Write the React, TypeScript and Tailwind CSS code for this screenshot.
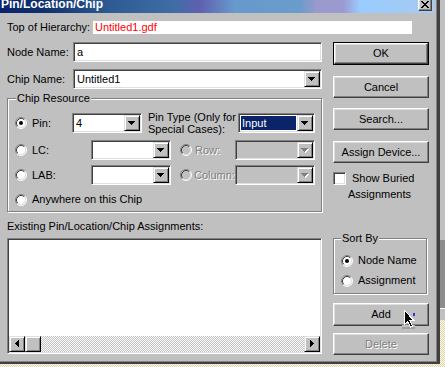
import React from 'react';

const sunken =
  'border border-t-[#808080] border-l-[#808080] border-b-white border-r-white shadow-[inset_1px_1px_0_#404040,inset_-1px_-1px_0_#dfdfdf]';
const raised =
  'border border-t-white border-l-white border-b-[#404040] border-r-[#404040] shadow-[inset_-1px_-1px_0_#808080,inset_1px_1px_0_#dfdfdf] bg-[#c0c0c0]';
const etched = 'border border-[#808080] shadow-[inset_1px_1px_0_#fff,1px_1px_0_#fff]';
const disabledText = 'text-[#808080] [text-shadow:1px_1px_0_#fff]';
const dither = 'bg-[repeating-conic-gradient(#ffffff_0%_25%,#c0c0c0_0%_50%)] bg-[length:2px_2px]';

function Arrow({ dir, disabled }: { dir: 'down' | 'left' | 'right'; disabled?: boolean }) {
  const fill = disabled ? '#808080' : '#000';
  const rows =
    dir === 'down'
      ? [
          [0, 0, 7, 1],
          [1, 1, 5, 1],
          [2, 2, 3, 1],
          [3, 3, 1, 1],
        ]
      : dir === 'left'
        ? [
            [3, 0, 1, 7],
            [2, 1, 1, 5],
            [1, 2, 1, 3],
            [0, 3, 1, 1],
          ]
        : [
            [0, 0, 1, 7],
            [1, 1, 1, 5],
            [2, 2, 1, 3],
            [3, 3, 1, 1],
          ];
  const w = dir === 'down' ? 8 : 5;
  const h = dir === 'down' ? 5 : 8;
  return (
    <svg width={w} height={h} viewBox={`0 0 ${w} ${h}`} shapeRendering="crispEdges">
      {disabled &&
        rows.map((r, i) => <rect key={'s' + i} x={r[0] + 1} y={r[1] + 1} width={r[2]} height={r[3]} fill="#fff" />)}
      {rows.map((r, i) => (
        <rect key={i} x={r[0]} y={r[1]} width={r[2]} height={r[3]} fill={fill} />
      ))}
    </svg>
  );
}

function ArrowButton({ dir, disabled }: { dir: 'down' | 'left' | 'right'; disabled?: boolean }) {
  return (
    <div className="flex h-[16px] w-[16px] shrink-0 items-center justify-center border border-t-[#dfdfdf] border-l-[#dfdfdf] border-b-black border-r-black bg-[#c0c0c0] shadow-[inset_1px_1px_0_#fff,inset_-1px_-1px_0_#808080]">
      <Arrow dir={dir} disabled={disabled} />
    </div>
  );
}

function Combo({ w, text, disabled, selected }: { w: string; text?: string; disabled?: boolean; selected?: boolean }) {
  return (
    <div className={`${sunken} ${w} flex h-[20px] shrink-0 p-[1px] ${disabled ? 'bg-[#c0c0c0]' : 'bg-white'}`}>
      <div className="flex flex-1 p-[1px]">
        <span className={`flex h-full w-full items-center pl-[1px] ${selected ? 'bg-[#0a246a] text-white' : ''}`}>
          {text}
        </span>
      </div>
      <ArrowButton dir="down" disabled={disabled} />
    </div>
  );
}

function Radio({ checked, disabled }: { checked?: boolean; disabled?: boolean }) {
  return (
    <svg width="12" height="12" viewBox="0 0 12 12" className="shrink-0">
      <circle cx="6" cy="6" r="5" fill={disabled ? '#c0c0c0' : '#fff'} />
      <path d="M2.11 9.89 A5.5 5.5 0 0 1 9.89 2.11" fill="none" stroke="#808080" />
      <path d="M9.89 2.11 A5.5 5.5 0 0 1 2.11 9.89" fill="none" stroke="#fff" />
      <path d="M2.82 9.18 A4.5 4.5 0 0 1 9.18 2.82" fill="none" stroke="#404040" />
      <path d="M9.18 2.82 A4.5 4.5 0 0 1 2.82 9.18" fill="none" stroke="#dfdfdf" />
      {checked && <circle cx="6" cy="6" r="2" fill="#000" />}
    </svg>
  );
}

function Button({ label, h = 'h-[22px]', mt, def, disabled }: { label: string; h?: string; mt: string; def?: boolean; disabled?: boolean }) {
  const inner = (
    <div className={`${raised} flex h-full w-full items-center justify-center ${disabled ? disabledText : ''}`}>
      {label}
    </div>
  );
  return (
    <div className={`${mt} ${h} w-[96px] ${def ? 'border border-black' : ''}`}>
      {inner}
    </div>
  );
}

export default function App() {
  return (
    <div className="relative h-[367px] w-[445px] overflow-hidden bg-[repeating-conic-gradient(#fffbe4_0%_25%,#d9d2b6_0%_50%)] bg-[length:2px_2px] font-['Liberation_Sans',Arial,sans-serif] text-[11px] leading-[13px] text-black">
      {/* window behind, on the right */}
      <div className="absolute left-[440px] top-0 h-[240px] w-[5px] bg-[#c0c0c0]" />
      <div className="absolute left-[440px] top-[240px] h-[68px] w-[5px] bg-[#8c8c8c]" />
      <div className="absolute left-[440px] top-[308px] h-[12px] w-[5px] border-t border-white bg-[#c0c0c0]" />

      <div className="flex h-[364px] w-[440px] flex-col border-r-[3px] border-b-2 border-[#404040] bg-[#c0c0c0] shadow-[inset_-1px_-1px_0_#808080]">
        {/* title bar */}
        <div className="mr-[3px] flex h-[13px] items-start bg-[linear-gradient(90deg,#0a246a_0%,#10306e_10%,#2d5a91_25%,#3f6da6_40%,#6060b0_46%,#6699cc_54%,#6a9ccc_69%,#9999cc_73%,#9a9ad0_79%,#99ccff_83%,#a6caf0_100%)]">
          <span className="-mt-[2px] pl-[1px] text-[12px] font-bold leading-[12px] text-white">Pin/Location/Chip</span>
          <div className={`${raised} -mt-[3px] ml-auto mr-[2px] flex h-[14px] w-[14px] items-center justify-center`}>
            <svg width="8" height="7" viewBox="0 0 8 7" shapeRendering="crispEdges">
              <path d="M0 0h2v1h1v1h2v-1h1v-1h2v1h-1v1h-1v1h-1v1h1v1h1v1h1v1h-2v-1h-1v-1h-2v1h-1v1h-2v-1h1v-1h1v-1h1v-1h-1v-1h-1v-1h-1z" fill="#000" />
            </svg>
          </div>
        </div>

        {/* top of hierarchy */}
        <div className="mt-[8px] flex items-center">
          <div className="w-[93px] pl-[7px]">Top of Hierarchy:</div>
          <div className="flex h-[13px] w-[319px] items-center bg-white pl-[2px] text-[#ff0000]">Untitled1.gdf</div>
        </div>

        <div className="mt-[8px] flex">
          {/* left column */}
          <div className="ml-[7px] flex w-[315px] flex-col">
            <div className="flex h-[20px] items-center">
              <div className="w-[66px]">Node Name:</div>
              <div className={`${sunken} flex h-[20px] w-[249px] items-center bg-white pl-[3px]`}>a</div>
            </div>
            <div className="mt-[7px] flex h-[20px] items-center">
              <div className="w-[66px]">Chip Name:</div>
              <Combo w="w-[249px]" text="Untitled1" />
            </div>

            <div className={`${etched} relative mt-[9px] h-[114px]`}>
              <span className="absolute -top-[7px] left-[8px] bg-[#c0c0c0] px-[1px]">Chip Resource</span>
              <div className="mt-[14px] flex h-[20px] items-center">
                <div className="flex w-[64px] items-center pl-[7px]">
                  <Radio checked />
                  <span className="ml-[5px]">Pin:</span>
                </div>
                <Combo w="w-[70px]" text="4" />
                <div className="ml-[6px] w-[90px] whitespace-nowrap leading-[12px]">
                  Pin Type (Only for
                  <br />
                  Special Cases):
                </div>
                <Combo w="w-[77px]" text="Input" selected />
              </div>
              <div className="mt-[7px] flex h-[20px] items-center">
                <div className="flex w-[83px] items-center pl-[7px]">
                  <Radio />
                  <span className="ml-[5px]">LC:</span>
                </div>
                <Combo w="w-[80px]" />
                <div className="ml-[9px] flex w-[55px] items-center">
                  <Radio disabled />
                  <span className={`ml-[3px] ${disabledText}`}>Row:</span>
                </div>
                <Combo w="w-[80px]" disabled />
              </div>
              <div className="mt-[5px] flex h-[20px] items-center">
                <div className="flex w-[83px] items-center pl-[7px]">
                  <Radio />
                  <span className="ml-[5px]">LAB:</span>
                </div>
                <Combo w="w-[80px]" />
                <div className="ml-[9px] flex w-[55px] items-center">
                  <Radio disabled />
                  <span className={`ml-[2px] whitespace-nowrap ${disabledText}`}>Column:</span>
                </div>
                <Combo w="w-[80px]" disabled />
              </div>
              <div className="mt-[8px] flex h-[13px] items-center pl-[7px]">
                <Radio />
                <span className="ml-[5px]">Anywhere on this Chip</span>
              </div>
            </div>

            <div className="mt-[8px]">Existing Pin/Location/Chip Assignments:</div>
            <div className={`${sunken} mt-[5px] flex h-[116px] flex-col bg-white p-[1px]`}>
              <div className="flex-1" />
              <div className="flex h-[16px]">
                <ArrowButton dir="left" />
                <div className="h-[16px] w-[16px] shrink-0 border border-t-[#dfdfdf] border-l-[#dfdfdf] border-b-black border-r-black bg-[#c0c0c0] shadow-[inset_1px_1px_0_#fff,inset_-1px_-1px_0_#808080]" />
                <div className={`flex-1 ${dither}`} />
                <ArrowButton dir="right" />
              </div>
            </div>
          </div>

          {/* right column */}
          <div className="ml-[11px] flex w-[96px] flex-col">
            <Button label="OK" h="h-[23px]" mt="mt-0" def />
            <Button label="Cancel" mt="mt-[11px]" />
            <Button label="Search..." mt="mt-[10px]" />
            <Button label="Assign Device..." mt="mt-[11px]" />
            <div className="mt-[9px] flex h-[13px] items-center">
              <div className={`${sunken} h-[13px] w-[13px] bg-white`} />
              <span className="ml-[6px]">Show Buried</span>
            </div>
            <div className="mt-[3px] pl-[15px]">Assignments</div>

            <div className={`${etched} relative mt-[37px] h-[56px] w-[94px]`}>
              <span className="absolute -top-[7px] left-[7px] bg-[#c0c0c0] px-[1px]">Sort By</span>
              <div className="mt-[15px] flex h-[13px] items-center pl-[7px]">
                <Radio checked />
                <span className="ml-[5px]">Node Name</span>
              </div>
              <div className="mt-[7px] flex h-[13px] items-center pl-[7px]">
                <Radio />
                <span className="ml-[5px]">Assignment</span>
              </div>
            </div>

            <Button label="Add" h="h-[23px]" mt="mt-[9px]" />
            <Button label="Delete" mt="mt-[7px]" disabled />
          </div>
        </div>
      </div>

      {/* mouse pointer over Add */}
      <div className="absolute left-[402px] top-[325px] h-[2px] w-[13px] bg-[#c0c0c0]" />
      <div className="absolute left-[402px] top-[327px] h-[2px] w-[13px] bg-[#a0a0a0]" />
      <svg className="absolute left-[404px] top-[310px]" width="12" height="18" viewBox="0 0 12 18" shapeRendering="crispEdges">
        <path d="M0.5 0.5 L0.5 14.5 L3.5 11.5 L6.5 17 L8.5 16 L6 10.5 L10 10.5 Z" fill="#000" stroke="#fff" strokeWidth="1" />
        <rect x="9" y="3" width="2" height="3" fill="#2040e0" />
      </svg>
    </div>
  );
}
